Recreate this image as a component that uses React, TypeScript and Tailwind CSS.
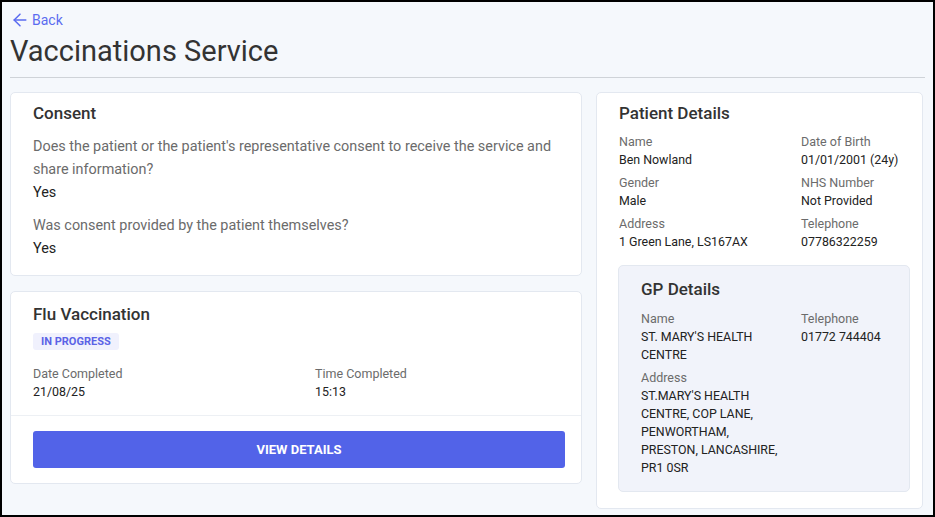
import { ArrowLeft } from 'lucide-react';

type Field = {
  label: string;
  value: string;
};

const patientFields: Field[] = [
  { label: 'Name', value: 'Ben Nowland' },
  { label: 'Date of Birth', value: '01/01/2001 (24y)' },
  { label: 'Gender', value: 'Male' },
  { label: 'NHS Number', value: 'Not Provided' },
  { label: 'Address', value: '1 Green Lane, LS167AX' },
  { label: 'Telephone', value: '07786322259' },
];

function Detail({ label, value }: Field) {
  return (
    <div>
      <p className="text-[12.5px] leading-[18px] text-[#6b6b6b]">{label}</p>
      <p className="text-[12.4px] leading-[18px] text-[#222]">{value}</p>
    </div>
  );
}

export default function App() {
  return (
    <div
      className="min-h-[517px] border-2 border-black bg-[#f5f8fc] px-2 pt-2 text-[#333]"
      style={{ fontFamily: 'Roboto, "Noto Sans", sans-serif' }}
    >
      <a href="#" className="flex items-center gap-[2px] text-sm leading-5 text-[#5b6cf0]">
        <ArrowLeft size={20} strokeWidth={1.8} />
        Back
      </a>
      <h1 className="mt-[1px] text-[29px] leading-[40px] text-[#333]">Vaccinations Service</h1>
      <hr className="mt-[6px] border-t border-[#cfd3d8]" />

      <div className="mt-[14px] grid grid-cols-[572px_1fr] gap-[14px] pr-[2px]">
        <div className="flex flex-col gap-[15px]">
          <section className="rounded-[5px] border border-[#e3e8f0] bg-white px-[22px] pt-[8px] pb-[15px]">
            <h2 className="text-[17px] font-medium leading-6 text-[#333]">Consent</h2>
            <p className="mt-[10px] text-[14.4px] leading-[23px] text-[#6b6b6b]">
              Does the patient or the patient's representative consent to receive the service and share information?
            </p>
            <p className="text-[14.4px] leading-[23px] text-[#222]">Yes</p>
            <p className="mt-[10px] text-[14.4px] leading-[23px] text-[#6b6b6b]">
              Was consent provided by the patient themselves?
            </p>
            <p className="text-[14.4px] leading-[23px] text-[#222]">Yes</p>
          </section>

          <section className="rounded-[5px] border border-[#e3e8f0] bg-white">
            <div className="px-[22px] pt-[10px] pb-[14px]">
              <h2 className="text-[17px] font-medium leading-6 text-[#333]">Flu Vaccination</h2>
              <span className="mt-[7px] inline-block rounded-[3px] bg-[#f0f1fd] px-[8px] text-[11px] font-bold leading-[17px] text-[#5b63e6]">
                IN PROGRESS
              </span>
              <div className="mt-[13px] grid grid-cols-[282px_1fr]">
                <Detail label="Date Completed" value="21/08/25" />
                <Detail label="Time Completed" value="15:13" />
              </div>
            </div>
            <div className="border-t border-[#edf0f4] pl-[22px] pr-[16px] pt-[15px] pb-[15px]">
              <button className="h-[37px] w-full rounded-[3px] bg-[#5263e8] text-[13px] font-bold text-white">
                VIEW DETAILS
              </button>
            </div>
          </section>
        </div>

        <section className="rounded-[5px] border border-[#e3e8f0] bg-white px-[22px] pt-[8px] pb-[16px]">
          <h2 className="text-[17px] font-medium leading-6 text-[#333]">Patient Details</h2>
          <div className="mt-[8px] grid grid-cols-[182px_1fr] gap-y-[5px]">
            {patientFields.map((f) => (
              <Detail key={f.label} label={f.label} value={f.value} />
            ))}
          </div>

          <div className="-mr-[10px] -ml-[1px] mt-[14px] rounded-[5px] border border-[#e3e8f0] bg-[#f1f3fa] px-[22px] pt-[11px] pb-[14px]">
            <h2 className="text-[17px] font-medium leading-6 text-[#333]">GP Details</h2>
            <div className="mt-[9px] grid grid-cols-[160px_1fr] gap-y-[5px]">
              <div className="pr-[17px]">
                <Detail label="Name" value="ST. MARY'S HEALTH CENTRE" />
              </div>
              <Detail label="Telephone" value="01772 744404" />
              <div className="pr-[17px]">
                <Detail label="Address" value="ST.MARY'S HEALTH CENTRE, COP LANE, PENWORTHAM, PRESTON, LANCASHIRE, PR1 0SR" />
              </div>
            </div>
          </div>
        </section>
      </div>
    </div>
  );
}
